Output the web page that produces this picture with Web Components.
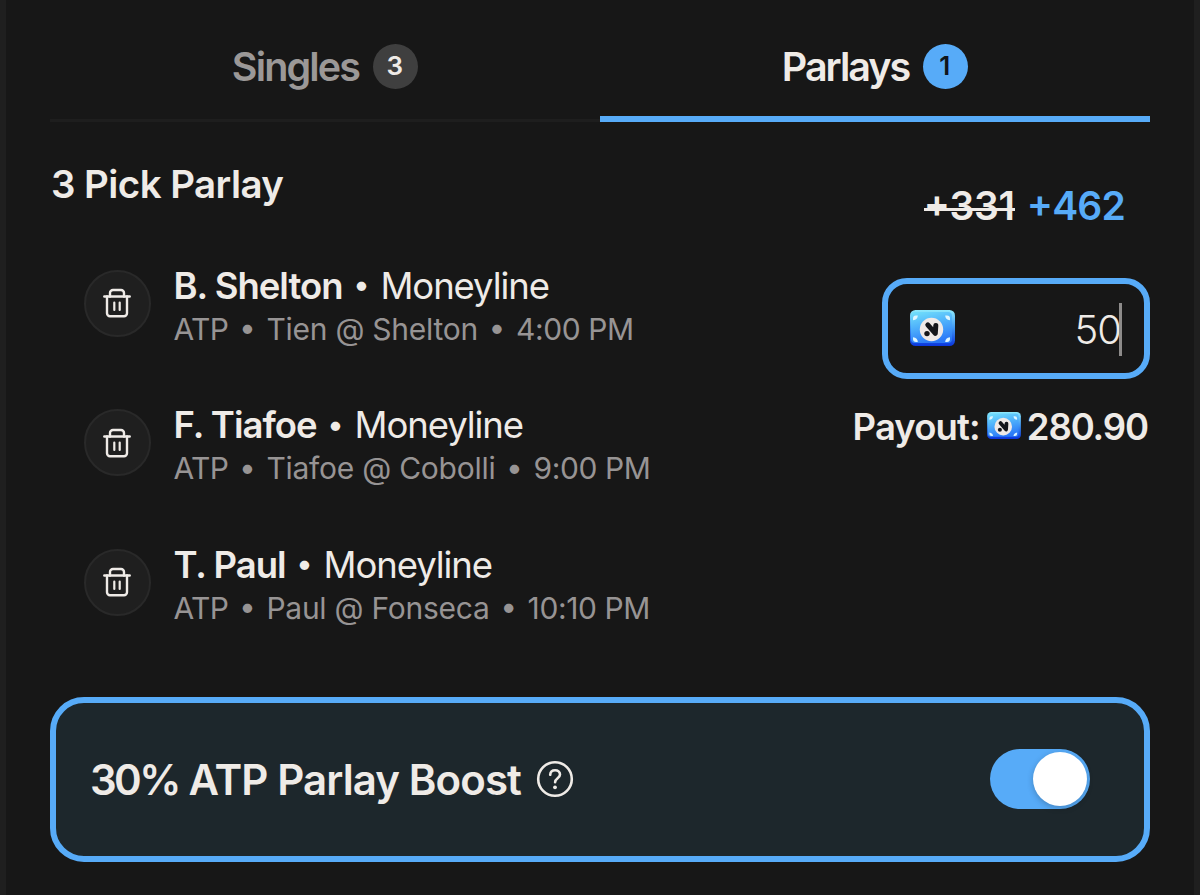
<!DOCTYPE html>
<html lang="en">
<head>
<meta charset="utf-8">
<title>Bet Slip</title>
<style>
    body {
        margin: 0;
        background: #171717;
        color: #efebe7;
        font-family: Inter, "Liberation Sans", sans-serif;
        --blue: #57abf8;
        --text: #efebe7;
        --muted: #979494;
    }
    .percent {
        letter-spacing: -2.6px;
    }
</style>
</head>
<body>
<bet-slip>
    <slip-tab slot="tabs" count="3">Singles</slip-tab>
    <slip-tab slot="tabs" count="1" active>Parlays</slip-tab>
    <span slot="title">3 Pick Parlay</span>
    <parlay-pick player="B. Shelton" market="Moneyline" league="ATP" match="Tien @ Shelton" time="4:00 PM"></parlay-pick>
    <parlay-pick player="F. Tiafoe" market="Moneyline" league="ATP" match="Tiafoe @ Cobolli" time="9:00 PM"></parlay-pick>
    <parlay-pick player="T. Paul" market="Moneyline" league="ATP" match="Paul @ Fonseca" time="10:10 PM"></parlay-pick>
    <parlay-wager slot="wager" old-odds="+331" odds="+462" stake="50" payout="280.90"></parlay-wager>
    <boost-card slot="boost"><span class="percent">30%</span> ATP Parlay Boost</boost-card>
</bet-slip>

<script>
class SlipTab extends HTMLElement {
    constructor() {
        super();
        this.shadow = this.attachShadow({mode: 'open'});
    }

    connectedCallback() {
        this.shadow.innerHTML = `
            <style>
                :host {
                    display: flex;
                    justify-content: center;
                    align-items: flex-start;
                    gap: 14px;
                    height: 122px;
                    padding-top: 43px;
                    box-sizing: border-box;
                    border-bottom: 3px solid #1e1e1e;
                    color: #9b9897;
                }
                :host([active]) {
                    border-bottom: 6px solid var(--blue);
                    color: var(--text);
                }
                .label {
                    font-size: 39.5px;
                    font-weight: 600;
                    line-height: 48px;
                    letter-spacing: -1.85px;
                }
                :host([active]) .label {
                    letter-spacing: -2px;
                }
                .count {
                    width: 45px;
                    height: 45px;
                    margin-top: 1px;
                    border-radius: 50%;
                    background: #3f3f3f;
                    color: var(--text);
                    font-size: 26px;
                    font-weight: 600;
                    line-height: 44px;
                    text-align: center;
                    text-indent: -2px;
                }
                :host([active]) .count {
                    background: var(--blue);
                    color: #10151b;
                }
            </style>
            <span class="label"><slot></slot></span>
            <span class="count">${this.getAttribute('count')}</span>
        `;
    }
}
customElements.define('slip-tab', SlipTab);

class TrashButton extends HTMLElement {
    constructor() {
        super();
        this.shadow = this.attachShadow({mode: 'open'});
    }

    connectedCallback() {
        this.shadow.innerHTML = `
            <style>
                :host {
                    display: flex;
                    align-items: center;
                    justify-content: center;
                    flex: none;
                    width: 67px;
                    height: 67px;
                    box-sizing: border-box;
                    border: 2px solid #292929;
                    border-radius: 50%;
                    background: #1f1f1f;
                }
                svg {
                    display: block;
                }
            </style>
            <svg width="28" height="30" viewBox="0 0 28 30" fill="none" stroke="#efebe7" stroke-width="2.4" stroke-linecap="round" stroke-linejoin="round">
                <path d="M1.3 8.5H26.7"/>
                <path d="M7 8.5V5a3 3 0 0 1 3-3h8a3 3 0 0 1 3 3v3.5"/>
                <path d="M4 8.5V25.3a3 3 0 0 0 3 3h14a3 3 0 0 0 3-3V8.5"/>
                <path d="M11.3 14.5V22M16.7 14.5V22" stroke-width="2.2"/>
            </svg>
        `;
    }
}
customElements.define('trash-button', TrashButton);

class ParlayPick extends HTMLElement {
    constructor() {
        super();
        this.shadow = this.attachShadow({mode: 'open'});
    }

    connectedCallback() {
        this.shadow.innerHTML = `
            <style>
                :host {
                    display: flex;
                    gap: 23px;
                    height: 79.5px;
                    white-space: nowrap;
                }
                .name, .info {
                    display: flex;
                    align-items: center;
                }
                .name {
                    font-size: 36.5px;
                    line-height: 44px;
                    margin-top: -6px;
                }
                b {
                    font-weight: 600;
                    letter-spacing: -1px;
                }
                .market {
                    letter-spacing: -1.1px;
                }
                .info {
                    margin-top: 1px;
                    font-size: 30px;
                    line-height: 40px;
                    color: var(--muted);
                }
                .league {
                    letter-spacing: -0.6px;
                }
                .match {
                    letter-spacing: -0.25px;
                }
                .time {
                    letter-spacing: -0.4px;
                }
                .dot {
                    width: 38px;
                    margin-bottom: 3px;
                    font-size: 30px;
                    line-height: 36px;
                    text-align: center;
                }
            </style>
            <trash-button></trash-button>
            <div>
                <div class="name"><b>${this.getAttribute('player')}</b><span class="dot">•</span><span class="market">${this.getAttribute('market')}</span></div>
                <div class="info">
                    <span class="league">${this.getAttribute('league')}</span><span class="dot">•</span>
                    <span class="match">${this.getAttribute('match')}</span><span class="dot">•</span>
                    <span class="time">${this.getAttribute('time')}</span>
                </div>
            </div>
        `;
    }
}
customElements.define('parlay-pick', ParlayPick);

class CashIcon extends HTMLElement {
    constructor() {
        super();
        this.shadow = this.attachShadow({mode: 'open'});
    }

    connectedCallback() {
        this.shadow.innerHTML = `
            <style>
                :host {
                    display: block;
                    flex: none;
                }
                svg {
                    display: block;
                    width: 100%;
                    height: 100%;
                }
            </style>
            <svg viewBox="0 0 45 36">
                <defs>
                    <linearGradient id="face" x1="0.2" y1="0" x2="0.5" y2="1">
                        <stop offset="0" stop-color="#6fdcfb"/>
                        <stop offset="0.45" stop-color="#4eb0fb"/>
                        <stop offset="1" stop-color="#2a78f8"/>
                    </linearGradient>
                    <linearGradient id="edge" x1="0" y1="0" x2="0" y2="1">
                        <stop offset="0" stop-color="#8feafc"/>
                        <stop offset="0.5" stop-color="#3f97f4"/>
                        <stop offset="1" stop-color="#0a35dc"/>
                    </linearGradient>
                </defs>
                <rect width="45" height="36" rx="5.5" fill="url(#edge)"/>
                <rect x="1" y="2" width="41" height="31" rx="4" fill="url(#face)"/>
                <g fill="#def6ff">
                    <path d="M3 8.5q0-3 3-3h1.8q0 4-4.8 4.8z"/>
                    <path d="M40 8.5q0-3-3-3h-1.8q0 4 4.8 4.8z"/>
                    <path d="M3 29q0 3 3 3h1.8q0-4-4.8-4.8z"/>
                    <path d="M40 29q0 3-3 3h-1.8q0-4 4.8-4.8z"/>
                </g>
                <circle cx="21.5" cy="19.5" r="11.7" fill="#efe9e6"/>
                <path d="M17.8 14.8L25.3 23.3L25.8 15.5" fill="none" stroke="#15161a" stroke-width="5" stroke-linecap="round" stroke-linejoin="round"/>
                <circle cx="17" cy="23.6" r="2.7" fill="#15161a"/>
            </svg>
        `;
    }
}
customElements.define('cash-icon', CashIcon);

class ParlayWager extends HTMLElement {
    constructor() {
        super();
        this.shadow = this.attachShadow({mode: 'open'});
    }

    connectedCallback() {
        this.shadow.innerHTML = `
            <style>
                :host {
                    display: flex;
                    flex-direction: column;
                    align-items: flex-end;
                    white-space: nowrap;
                }
                .odds {
                    display: flex;
                    gap: 12px;
                    margin: 20px 25px 0 0;
                    font-size: 39px;
                    font-weight: 600;
                    line-height: 48px;
                    font-feature-settings: "case";
                }
                .old {
                    letter-spacing: -0.3px;
                    background: linear-gradient(var(--text), var(--text)) 0 26px / 100% 3px no-repeat;
                }
                .new {
                    color: var(--blue);
                    letter-spacing: -0.8px;
                }
                .field {
                    display: flex;
                    align-items: center;
                    justify-content: space-between;
                    width: 268px;
                    height: 101px;
                    margin-top: 48px;
                    padding: 0 22px;
                    box-sizing: border-box;
                    border: 6px solid var(--blue);
                    border-radius: 25px;
                }
                .field cash-icon {
                    width: 45px;
                    height: 36px;
                    margin-bottom: 2px;
                }
                .stake {
                    display: flex;
                    align-items: center;
                    margin-top: 2px;
                    font-size: 40px;
                    font-weight: 350;
                    line-height: 53px;
                    letter-spacing: -1px;
                }
                .caret {
                    width: 3px;
                    height: 53px;
                    margin-left: -2px;
                    background: #8d8b8a;
                }
                .payout {
                    display: flex;
                    align-items: center;
                    margin: 26px 2px 0 0;
                    font-size: 36.5px;
                    font-weight: 600;
                    line-height: 44px;
                }
                .payout cash-icon {
                    width: 34px;
                    height: 27px;
                    margin: 0 6px 3px 7px;
                }
                .pay {
                    letter-spacing: -0.9px;
                }
                .amount {
                    letter-spacing: -1.1px;
                }
            </style>
            <div class="odds">
                <span class="old">${this.getAttribute('old-odds')}</span>
                <span class="new">${this.getAttribute('odds')}</span>
            </div>
            <div class="field">
                <cash-icon></cash-icon>
                <span class="stake">${this.getAttribute('stake')}<i class="caret"></i></span>
            </div>
            <div class="payout"><span class="pay">Payout:</span><cash-icon></cash-icon><span class="amount">${this.getAttribute('payout')}</span></div>
        `;
    }
}
customElements.define('parlay-wager', ParlayWager);

class ToggleSwitch extends HTMLElement {
    constructor() {
        super();
        this.shadow = this.attachShadow({mode: 'open'});
    }

    connectedCallback() {
        this.shadow.innerHTML = `
            <style>
                :host {
                    display: flex;
                    align-items: center;
                    justify-content: flex-end;
                    width: 100px;
                    height: 60px;
                    padding-right: 3px;
                    box-sizing: border-box;
                    border-radius: 30px;
                    background: var(--blue);
                }
                .knob {
                    width: 54px;
                    height: 54px;
                    border-radius: 50%;
                    background: #fff;
                    box-shadow: 0 2px 6px rgba(0, 0, 0, 0.22);
                }
            </style>
            <div class="knob"></div>
        `;
    }
}
customElements.define('toggle-switch', ToggleSwitch);

class BoostCard extends HTMLElement {
    constructor() {
        super();
        this.shadow = this.attachShadow({mode: 'open'});
    }

    connectedCallback() {
        this.shadow.innerHTML = `
            <style>
                :host {
                    display: flex;
                    align-items: center;
                    height: 165px;
                    padding: 0 54px 0 34px;
                    box-sizing: border-box;
                    border: 6px solid var(--blue);
                    border-radius: 34px;
                    background: #1d272c;
                }
                .label {
                    font-size: 42px;
                    font-weight: 600;
                    line-height: 52px;
                    letter-spacing: -0.9px;
                    white-space: nowrap;
                }
                svg {
                    margin: 0 0 1px 15px;
                }
                toggle-switch {
                    margin: 0 0 1px auto;
                }
            </style>
            <span class="label"><slot></slot></span>
            <svg width="38" height="38" viewBox="0 0 38 38" fill="none" stroke="#efebe7" stroke-width="2.6" stroke-linecap="round">
                <circle cx="19" cy="19" r="16.8"/>
                <path d="M14.2 14.8c0.2-2.8 2.2-4.500 4.900-4.500 2.800 0 4.900 1.700 4.900 4.300 0 3.600-4.900 3.700-4.900 7.600"/>
                <circle cx="19" cy="27.3" r="1.9" fill="#efebe7" stroke="none"/>
            </svg>
            <toggle-switch></toggle-switch>
        `;
    }
}
customElements.define('boost-card', BoostCard);

class BetSlip extends HTMLElement {
    constructor() {
        super();
        this.shadow = this.attachShadow({mode: 'open'});
    }

    connectedCallback() {
        this.shadow.innerHTML = `
            <style>
                :host {
                    display: block;
                    height: 895px;
                    padding: 0 44px;
                    box-sizing: border-box;
                    border: solid #1f1f1f;
                    border-width: 0 6px;
                    overflow: hidden;
                }
                .tabs {
                    display: grid;
                    grid-template-columns: 1fr 1fr;
                }
                .parlay {
                    display: flex;
                    justify-content: space-between;
                    height: 535px;
                    padding-top: 40px;
                }
                .title {
                    margin-left: 1px;
                    font-size: 38.5px;
                    font-weight: 600;
                    line-height: 44px;
                    letter-spacing: -0.57px;
                }
                .picks {
                    display: flex;
                    flex-direction: column;
                    gap: 60px;
                    padding: 63.5px 0 0 33.5px;
                }
            </style>
            <div class="tabs"><slot name="tabs"></slot></div>
            <div class="parlay">
                <div>
                    <div class="title"><slot name="title"></slot></div>
                    <div class="picks"><slot></slot></div>
                </div>
                <slot name="wager"></slot>
            </div>
            <slot name="boost"></slot>
        `;
    }
}
customElements.define('bet-slip', BetSlip);
</script>
</body>
</html>
